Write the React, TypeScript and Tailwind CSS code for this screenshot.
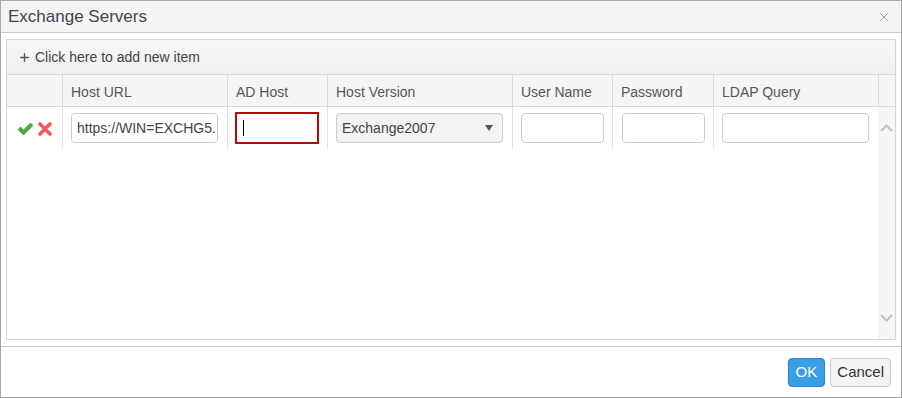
import { Plus, X } from "lucide-react";

function Check() {
  return (
    <svg width="17" height="14" viewBox="0 0 17 14">
      <path d="M1 7.5 L3.5 5 L6.5 8 L13.5 1 L16 3.5 L6.5 13 Z" fill="#4ca93b" stroke="#3a8f2c" strokeWidth="0.6" strokeLinejoin="round" />
    </svg>
  );
}

function Cross() {
  return (
    <svg width="14" height="14" viewBox="0 0 14 14">
      <path d="M2 2 L12 12 M12 2 L2 12" stroke="#f0595b" strokeWidth="3.6" strokeLinecap="round" />
    </svg>
  );
}

function Chevron({ up }: { up?: boolean }) {
  return (
    <svg width="13" height="8" viewBox="0 0 13 8">
      <path d={up ? "M1 7 L6.5 1.5 L12 7" : "M1 1 L6.5 6.5 L12 1"} fill="none" stroke="#c2c2c2" strokeWidth="2" />
    </svg>
  );
}

export default function App() {
  const headers = ["", "Host URL", "AD Host", "Host Version", "User Name", "Password", "LDAP Query", ""];

  return (
    <div className="flex h-[398px] w-[902px] flex-col border border-[#a6a6a6] bg-white font-['Liberation_Sans',Arial,sans-serif] text-[14px] text-[#333]">
      <div className="flex h-[32px] shrink-0 items-center justify-between border-b border-[#c8c8c8] bg-[#f5f5f5] pl-[7px] pr-[10px]">
        <span className="text-[17px] text-[#3c4550]">Exchange Servers</span>
        <X size={14} strokeWidth={1.4} className="text-[#888]" />
      </div>

      <div className="flex-1 px-[5px] pt-[6px] pb-[6px]">
        <div className="flex h-full flex-col border border-[#d5d5d5]">
          <div className="flex h-[35px] items-center gap-[4px] border-b border-[#d9d9d9] bg-gradient-to-b from-[#f8f8f8] to-[#efefef] pl-[11px] text-[#444]">
            <Plus size={13} strokeWidth={2.6} className="text-[#555]" />
            <span>Click here to add new item</span>
          </div>

          <div className="grid h-[32px] grid-cols-[55px_165px_100px_185px_100px_101px_165px_1fr] border-b border-[#d9d9d9] bg-[#f5f5f5] text-[#555]">
            {headers.map((h, i) => (
              <div key={i} className={`flex items-center pl-[8px] pt-[3px] ${i > 0 ? "border-l border-[#d9d9d9]" : ""}`}>
                {h}
              </div>
            ))}
          </div>

          <div className="flex flex-1">
            <div className="grid flex-1 grid-cols-[55px_165px_100px_185px_100px_101px_165px] content-start">
              <div className="flex h-[42px] items-center gap-[4px] pl-[10px] pt-[2px]">
                <Check />
                <Cross />
              </div>
              <div className="flex items-center border-l border-[#e3e3e3] px-[8px]">
                <div className="flex h-[30px] w-[147px] items-center overflow-hidden rounded-[4px] border border-[#ccc] pl-[5px] whitespace-nowrap text-[#444]">
                  https://WIN=EXCHG5.
                </div>
              </div>
              <div className="flex items-center border-l border-[#e3e3e3] pl-[7px]">
                <div className="flex h-[32px] w-[84px] items-center border-2 border-[#b50d0d] pl-[6px]">
                  <span className="h-[16px] w-px bg-black" />
                </div>
              </div>
              <div className="flex items-center border-l border-[#e3e3e3] pl-[8px]">
                <div className="flex h-[30px] w-[167px] items-center justify-between rounded-[4px] border border-[#ccc] bg-[#f3f3f3] pl-[5px] pr-[9px] text-[#444]">
                  <span>Exchange2007</span>
                  <svg width="8" height="6" viewBox="0 0 8 6"><path d="M0 0 H8 L4 6 Z" fill="#555" /></svg>
                </div>
              </div>
              <div className="flex items-center border-l border-[#e3e3e3] pl-[8px]">
                <div className="h-[30px] w-[83px] rounded-[4px] border border-[#ccc]" />
              </div>
              <div className="flex items-center border-l border-[#e3e3e3] pl-[9px]">
                <div className="h-[30px] w-[83px] rounded-[4px] border border-[#ccc]" />
              </div>
              <div className="flex items-center border-l border-[#e3e3e3] pl-[8px]">
                <div className="h-[30px] w-[147px] rounded-[4px] border border-[#ccc]" />
              </div>
            </div>
            <div className="flex w-[17px] flex-col items-center justify-between bg-[#f5f5f5] pt-[17px] pb-[17px]">
              <Chevron up />
              <Chevron />
            </div>
          </div>
        </div>
      </div>

      <div className="flex h-[51px] shrink-0 items-center justify-end gap-[5px] border-t border-[#c8c8c8] pr-[10px]">
        <button className="h-[29px] rounded-[4px] border border-[#2a84c8] bg-[#3a9fe4] px-[7px] text-[15px] text-white">OK</button>
        <button className="h-[29px] rounded-[4px] border border-[#ccc] bg-[#f3f3f3] px-[6px] text-[15px] text-[#333]">Cancel</button>
      </div>
    </div>
  );
}
